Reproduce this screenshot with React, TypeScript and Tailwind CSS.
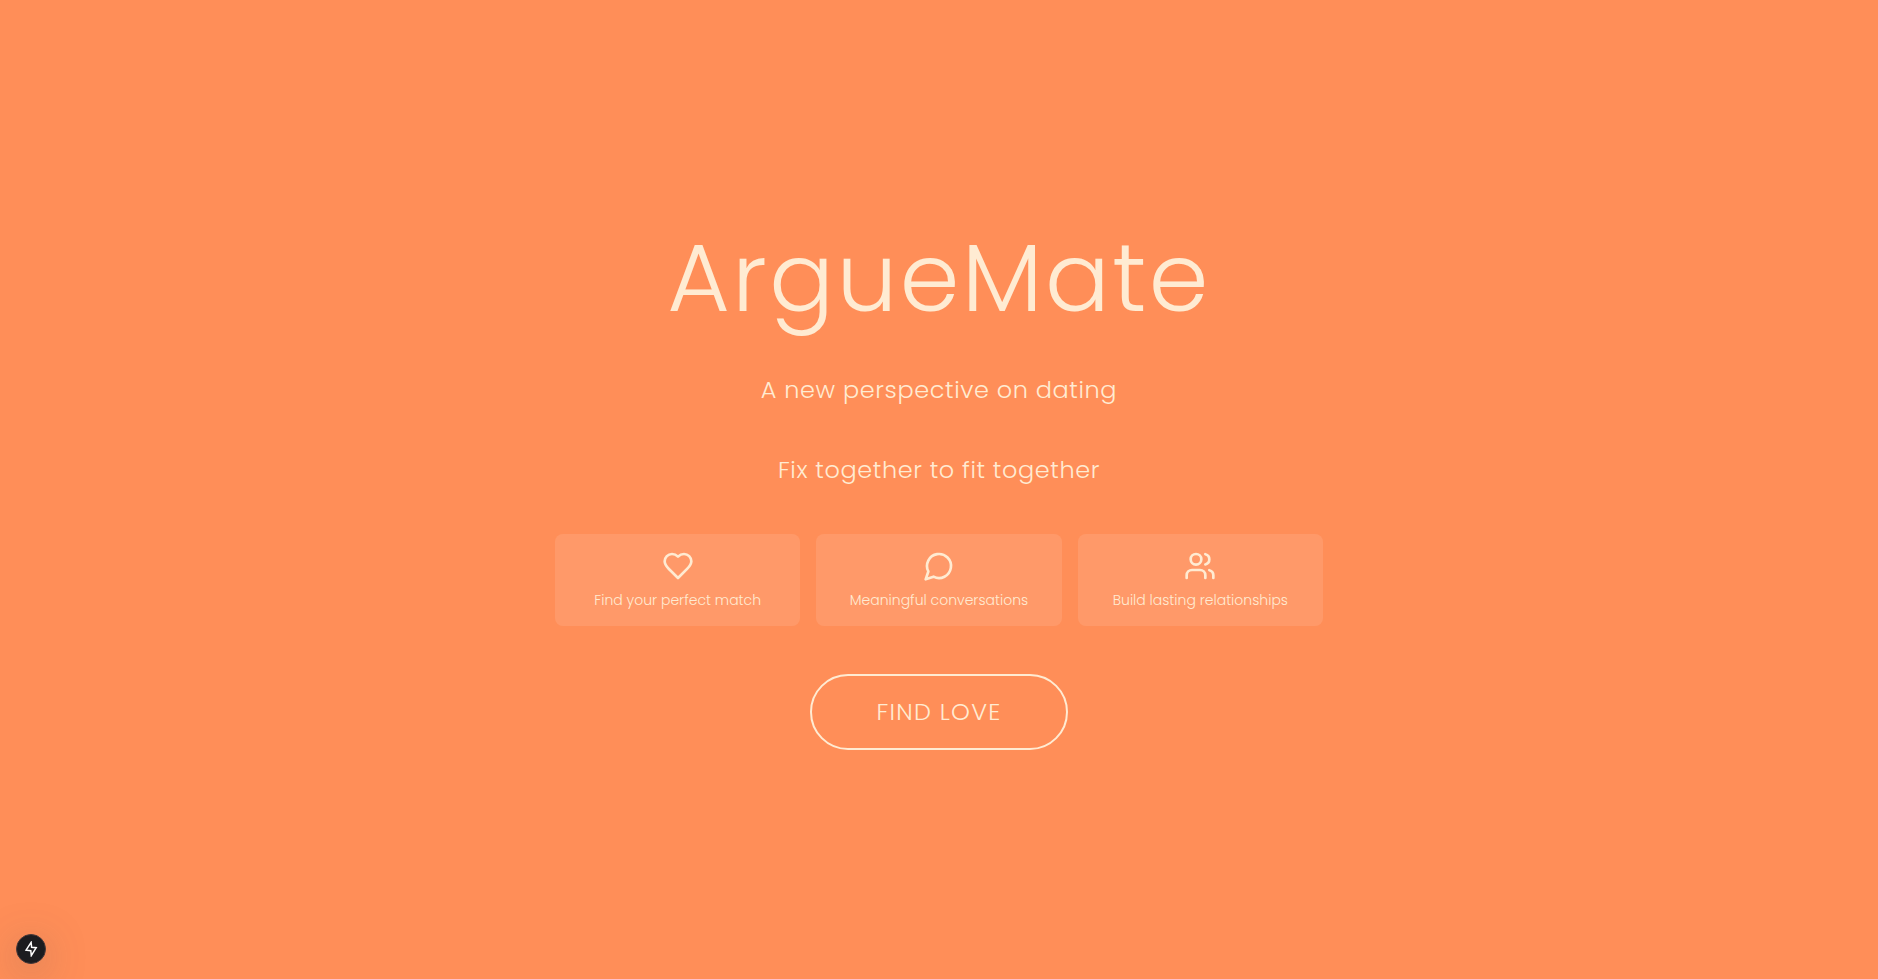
import type { SVGProps } from "react";
import { Users } from "lucide-react";

type IconProps = SVGProps<SVGSVGElement>;

const strokeProps = {
  viewBox: "0 0 24 24",
  fill: "none",
  stroke: "currentColor",
  strokeWidth: 2,
  strokeLinecap: "round",
  strokeLinejoin: "round",
} as const;

function HeartIcon(props: IconProps) {
  return (
    <svg {...strokeProps} {...props}>
      <path d="M19 14c1.49-1.46 3-3.21 3-5.5A5.5 5.5 0 0 0 16.5 3c-1.76 0-3 .5-4.5 2-1.5-1.5-2.74-2-4.5-2A5.5 5.5 0 0 0 2 8.5c0 2.3 1.5 4.05 3 5.5l7 7Z" />
    </svg>
  );
}

function ChatIcon(props: IconProps) {
  return (
    <svg {...strokeProps} {...props}>
      <path d="M7.9 20A9 9 0 1 0 4 16.1L2 22Z" />
    </svg>
  );
}

const features = [
  { icon: HeartIcon, label: "Find your perfect match" },
  { icon: ChatIcon, label: "Meaningful conversations" },
  { icon: Users, label: "Build lasting relationships" },
];

export default function App() {
  return (
    <main className="flex min-h-screen flex-col items-center justify-center bg-[#ff8e58] px-4 text-[#ffebd2] [font-family:Poppins,sans-serif]">
      <div className="flex w-full max-w-3xl flex-col items-center gap-12 text-center">
        <h1 className="text-8xl leading-none font-light tracking-wide">ArgueMate</h1>
        <p className="text-2xl font-light tracking-wide">A new perspective on dating</p>
        <p className="text-2xl font-light tracking-wide">Fix together to fit together</p>
        <ul className="grid w-full grid-cols-3 gap-4">
          {features.map(({ icon: Icon, label }) => (
            <li key={label} className="flex flex-col items-center gap-2 rounded-lg bg-white/10 p-4">
              <Icon className="size-8" aria-hidden="true" />
              <span className="text-sm font-light">{label}</span>
            </li>
          ))}
        </ul>
        <button
          type="button"
          className="rounded-full border-2 border-[#ffebd2] px-16 py-5 text-2xl font-light tracking-wider"
        >
          FIND LOVE
        </button>
      </div>
      <button
        type="button"
        aria-label="Open developer tools"
        className="fixed bottom-[15px] left-4 flex size-[30px] items-center justify-center rounded-full border border-[#46393a] bg-[#1c1c1f] text-white shadow-[0_8px_40px_rgba(90,90,90,0.35)]"
      >
        <svg viewBox="0 0 16 16" className="size-4" fill="none" stroke="currentColor" strokeWidth="1.5" aria-hidden="true">
          <path d="M8.1 1.4 3.1 9.2l4.7.5.5 4.9 4.9-7.9-4.6-.5Z" />
        </svg>
      </button>
    </main>
  );
}
